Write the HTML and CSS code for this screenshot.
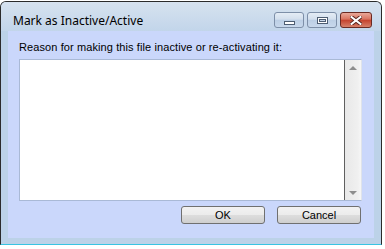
FILE: index.html
```html
<!DOCTYPE html>
<html lang="en">
<head>
  <meta charset="UTF-8" />
  <title>Mark as Inactive/Active</title>
  <link rel="stylesheet" href="styles.css">
</head>
<body>
  <!-- Dialog window -->
  <div class="window">
    <div class="titlebar">
      <span class="title">Mark as Inactive/Active</span>
      <div class="caption-buttons">
        <button class="cap-btn minimize"><span class="min-glyph"></span></button>
        <button class="cap-btn maximize"><span class="max-glyph"></span></button>
        <button class="cap-btn close">
          <svg width="12" height="9" viewBox="0 0 12 9">
            <path d="M1.5 1 L10.5 8 M10.5 1 L1.5 8" stroke="#5a2620" stroke-width="4" stroke-linecap="square" />
            <path d="M1.5 1 L10.5 8 M10.5 1 L1.5 8" stroke="#fff" stroke-width="2" stroke-linecap="square" />
          </svg>
        </button>
      </div>
    </div>

    <div class="client">
      <label class="prompt" for="reason">Reason for making this file inactive or re-activating it:</label>
      <div class="memo">
        <div class="memo-text" id="reason"></div>
        <div class="scrollbar">
          <span class="arrow up"></span>
          <span class="arrow down"></span>
        </div>
      </div>
      <div class="actions">
        <button class="btn">OK</button>
        <button class="btn">Cancel</button>
      </div>
    </div>
  </div>
</body>
</html>
```

FILE: styles.css
```css
* {
  margin: 0;
  padding: 0;
  box-sizing: border-box;
}
body {
  background: #fff;
  font-family: "Noto Sans", "Liberation Sans", sans-serif;
  font-size: 12px;
  color: #000;
}
/* Window frame */
.window {
  margin-top: 1px;
  width: 382px;
  height: 244px;
  border: 1px solid #2b2b2b;
  border-bottom-color: #38c4e2;
  border-radius: 6px 6px 0 0;
  background: #bcd2e8;
  padding: 0 7px 6px 7px;
  display: flex;
  flex-direction: column;
}
.titlebar {
  height: 29px;
  display: flex;
  align-items: flex-start;
  justify-content: space-between;
  margin: 0 -7px;
  padding: 0 9px 0 12px;
  border-radius: 5px 5px 0 0;
  background: linear-gradient(#d6e2ef, #c2d5ea);
}
.title {
  margin-top: 11px;
  line-height: 15px;
}
.caption-buttons {
  display: flex;
  gap: 3px;
  margin-top: 10px;
}
.cap-btn {
  width: 30px;
  height: 16px;
  border: 1px solid #7d8fa8;
  border-radius: 3px;
  background: linear-gradient(#e4ecf5 0%, #d3dfed 45%, #bccfe5 50%, #c8d8ec 100%);
  display: flex;
  align-items: center;
  justify-content: center;
}
.min-glyph {
  width: 11px;
  height: 4px;
  margin-top: 5px;
  background: #fff;
  border: 1px solid #4d5d72;
}
.max-glyph {
  width: 11px;
  height: 7px;
  border: 1px solid #4d5d72;
  box-shadow: inset 0 0 0 1px #fff, inset 0 0 0 2px #4d5d72;
  background: #c8d6e8;
}
.cap-btn.close {
  width: 32px;
  border-color: #6b2a22;
  background: linear-gradient(#e9a899 0%, #d9735f 45%, #c4412c 50%, #d6806a 100%);
}
/* Client area */
.client {
  flex: 1;
  background: #cad7fb;
  padding: 9px 12px 0 11px;
  display: flex;
  flex-direction: column;
  font-family: "Liberation Sans", Arial, sans-serif;
  font-size: 11px;
  letter-spacing: 0.1px;
}
.prompt {
  line-height: 15px;
  margin-bottom: 4px;
}
.memo {
  height: 142px;
  display: flex;
  border: 1px solid #a9b9d6;
  border-right-color: #dfe3ea;
  background: #fff;
}
.memo-text {
  flex: 1;
}
.scrollbar {
  width: 17px;
  border-left: 1px solid #5f5f5f;
  background: linear-gradient(90deg, #e8e8e8, #f0f0f0 80%, #f6f6f6);
  display: flex;
  flex-direction: column;
  justify-content: space-between;
  align-items: center;
  padding: 6px 0 5px;
}
.arrow {
  width: 0;
  height: 0;
  border-left: 4px solid transparent;
  border-right: 4px solid transparent;
}
.arrow.up {
  border-bottom: 4px solid #8e8e8e;
}
.arrow.down {
  border-top: 4px solid #8e8e8e;
}
.actions {
  display: flex;
  justify-content: flex-end;
  gap: 12px;
  margin-top: 5px;
  padding-right: 1px;
}
.btn {
  width: 84px;
  height: 18px;
  font: inherit;
  line-height: 14px;
  border: 1px solid #707070;
  border-radius: 3px;
  background: linear-gradient(#f2f2f2 0%, #ebebeb 50%, #dddddd 51%, #cfcfcf 100%);
  color: #000;
}
```
